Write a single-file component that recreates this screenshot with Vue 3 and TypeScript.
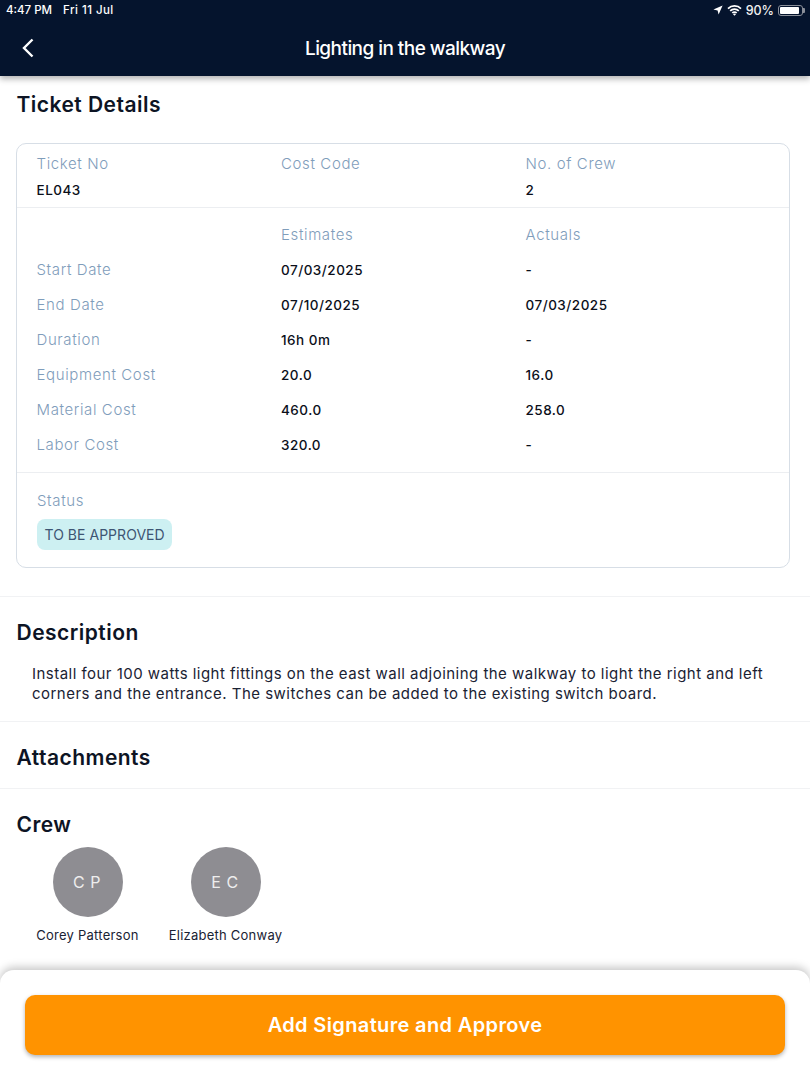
<script setup lang="ts">
const rows = [
  ['Start Date', '07/03/2025', '-'],
  ['End Date', '07/10/2025', '07/03/2025'],
  ['Duration', '16h 0m', '-'],
  ['Equipment Cost', '20.0', '16.0'],
  ['Material Cost', '460.0', '258.0'],
  ['Labor Cost', '320.0', '-'],
]
const crew = [
  { initials: 'C P', name: 'Corey Patterson' },
  { initials: 'E C', name: 'Elizabeth Conway' },
]
</script>

<template>
  <div class="page">
    <header class="top">
      <div class="status">
        <div class="time"><span>4:47 PM</span><span class="date">Fri 11 Jul</span></div>
        <div class="sys">
          <svg width="10" height="10" viewBox="0 0 10 10"><path d="M9.6.4 5.6 9.6 4.6 5.4.4 4.4Z" fill="#fff"/></svg>
          <svg width="15" height="11" viewBox="0 0 15 11"><path d="M1 3.6a9.2 9.2 0 0 1 13 0M3.2 5.9a6.1 6.1 0 0 1 8.6 0M5.3 8a3.1 3.1 0 0 1 4.4 0" fill="none" stroke="#fff" stroke-width="1.7"/><path d="M7.5 10.8 6 9.2a2.1 2.1 0 0 1 3 0Z" fill="#fff"/></svg>
          <span>90%</span>
          <span class="battery"><i></i></span>
        </div>
      </div>
      <div class="nav">
        <svg class="back" width="14" height="20" viewBox="0 0 14 20"><path d="M11.5 1.5 3 10l8.5 8.5" fill="none" stroke="#fff" stroke-width="2.4"/></svg>
        <div class="title">Lighting in the walkway</div>
      </div>
    </header>

    <main class="content">
      <section class="details">
        <h2>Ticket Details</h2>
        <div class="card">
          <div class="grid head">
            <div><div class="label">Ticket No</div><div class="val mt">EL043</div></div>
            <div><div class="label">Cost Code</div></div>
            <div><div class="label">No. of Crew</div><div class="val mt">2</div></div>
          </div>
          <div class="costs">
            <div class="grid line"><span></span><span class="label">Estimates</span><span class="label">Actuals</span></div>
            <div v-for="r in rows" :key="r[0]" class="grid line">
              <span class="label">{{ r[0] }}</span><span class="val">{{ r[1] }}</span><span class="val">{{ r[2] }}</span>
            </div>
          </div>
          <div class="state">
            <div class="label">Status</div>
            <span class="badge">TO BE APPROVED</span>
          </div>
        </div>
      </section>

      <section class="desc">
        <h2>Description</h2>
        <p>Install four 100 watts light fittings on the east wall adjoining the walkway to light the right and left corners and the entrance. The switches can be added to the existing switch board.</p>
      </section>

      <section class="attach"><h2>Attachments</h2></section>

      <section class="crew">
        <h2>Crew</h2>
        <div class="people">
          <div v-for="c in crew" :key="c.name" class="person">
            <div class="avatar">{{ c.initials }}</div>
            <div class="name">{{ c.name }}</div>
          </div>
        </div>
      </section>
    </main>

    <footer class="foot">
      <button class="cta">Add Signature and Approve</button>
    </footer>
  </div>
</template>

<style>
html, body { margin: 0; background: #fff; }
</style>

<style scoped>
.page {
  width: 810px; height: 1080px; position: relative; overflow: hidden;
  display: flex; flex-direction: column; background: #fff;
  font-family: Inter, "Liberation Sans", sans-serif; color: #0d1424;
}
.top { height: 76px; background: #05142d; color: #fff; box-shadow: 0 3px 6px rgba(0,0,0,.3); flex: none; position: relative; z-index: 1; }
.status { height: 20px; padding: 0 7px 0 6px; display: flex; justify-content: space-between; align-items: center; font-size: 11.5px; font-weight: 500; }
.time { display: flex; gap: 11px; }
.date { letter-spacing: .45px; }
.sys { display: flex; align-items: center; gap: 4px; color: #f0f0f0; font-size: 12.5px; }
.battery { width: 25px; height: 11px; border: 1px solid #8a8f99; border-radius: 3px; padding: 1px; box-sizing: border-box; display: block; position: relative; }
.battery i { display: block; width: 90%; height: 100%; background: #fff; border-radius: 1px; }
.battery::after { content: ""; position: absolute; right: -3px; top: 2px; width: 2px; height: 5px; background: #8a8f99; border-radius: 0 1px 1px 0; }
.nav { height: 56px; display: flex; align-items: center; justify-content: center; position: relative; }
.back { position: absolute; left: 21px; top: 18px; }
.title { font-size: 19px; font-weight: 500; letter-spacing: -.55px; }

.content { flex: 1; min-height: 0; }
h2 { margin: 0; padding-left: .5px; font-size: 21px; line-height: 26px; font-weight: 600; letter-spacing: .47px; color: #0d1424; }
section { border-bottom: 1px solid #f1f2f4; padding: 0 16px; }
.details { height: 521px; box-sizing: border-box; padding-top: 16px; }
.card { margin-top: 25px; margin-right: 4px; border: 1px solid #d7dee6; border-radius: 10px; height: 425px; box-sizing: border-box; }
.grid { display: grid; grid-template-columns: 244.5px 244.5px 1fr; padding-left: 19.5px; }
.head { height: 64px; padding-top: 9px; box-sizing: border-box; border-bottom: 1px solid #eceef1; }
.label { font-size: 15px; line-height: 20px; padding-top: 1px; font-weight: 300; color: #7f9dbb; letter-spacing: .62px; }
.line .label { padding-top: 1px; }
.val { font-size: 13.5px; line-height: 20px; font-weight: 500; letter-spacing: .5px; color: #0b0f1a; }
.mt { margin-top: 6px; }
.costs { padding-top: 9px; height: 265px; box-sizing: border-box; border-bottom: 1px solid #eceef1; }
.line { height: 35px; align-items: center; }
.state { padding: 17px 20px 0; }
.badge { display: inline-block; margin-top: 8px; height: 31px; line-height: 31px; padding: 0 7.5px; border-radius: 8px; background: #cdf0f2; color: #3d5573; font-size: 14px; letter-spacing: .03px; }
.desc { height: 125px; box-sizing: border-box; padding-top: 23px; }
.desc p { margin: 18px 0 0; padding: 0 16px; font-size: 15px; line-height: 20px; letter-spacing: .47px; color: #1a2233; }
.attach { height: 67px; box-sizing: border-box; padding-top: 23px; }
.crew { border: 0; padding-top: 23px; }
.people { display: flex; margin-top: 9px; }
.person { width: 138px; display: flex; flex-direction: column; align-items: center; padding-left: 1px; box-sizing: border-box; }
.person:first-child { margin-left: 2px; }
.avatar { width: 70px; height: 70px; border-radius: 50%; background: #8e8d92; color: #eee; display: flex; align-items: center; justify-content: center; font-size: 16px; letter-spacing: .6px; padding-right: 1px; box-sizing: border-box; }
.name { margin-top: 9px; font-size: 13px; line-height: 18px; letter-spacing: .24px; white-space: nowrap; color: #1a2233; }
.foot { position: absolute; left: 0; right: 0; bottom: 0; height: 110px; background: #fff; border-radius: 14px 14px 0 0; box-shadow: 0 -3px 8px rgba(0,0,0,.22); box-sizing: border-box; padding: 25px 25px 0; }
.cta { width: 100%; height: 60px; border: 0; border-radius: 10px; background: #ff9300; color: #fff; font-family: inherit; font-size: 20px; font-weight: 600; letter-spacing: .36px; box-shadow: 0 2px 4px rgba(0,0,0,.3); }
</style>
